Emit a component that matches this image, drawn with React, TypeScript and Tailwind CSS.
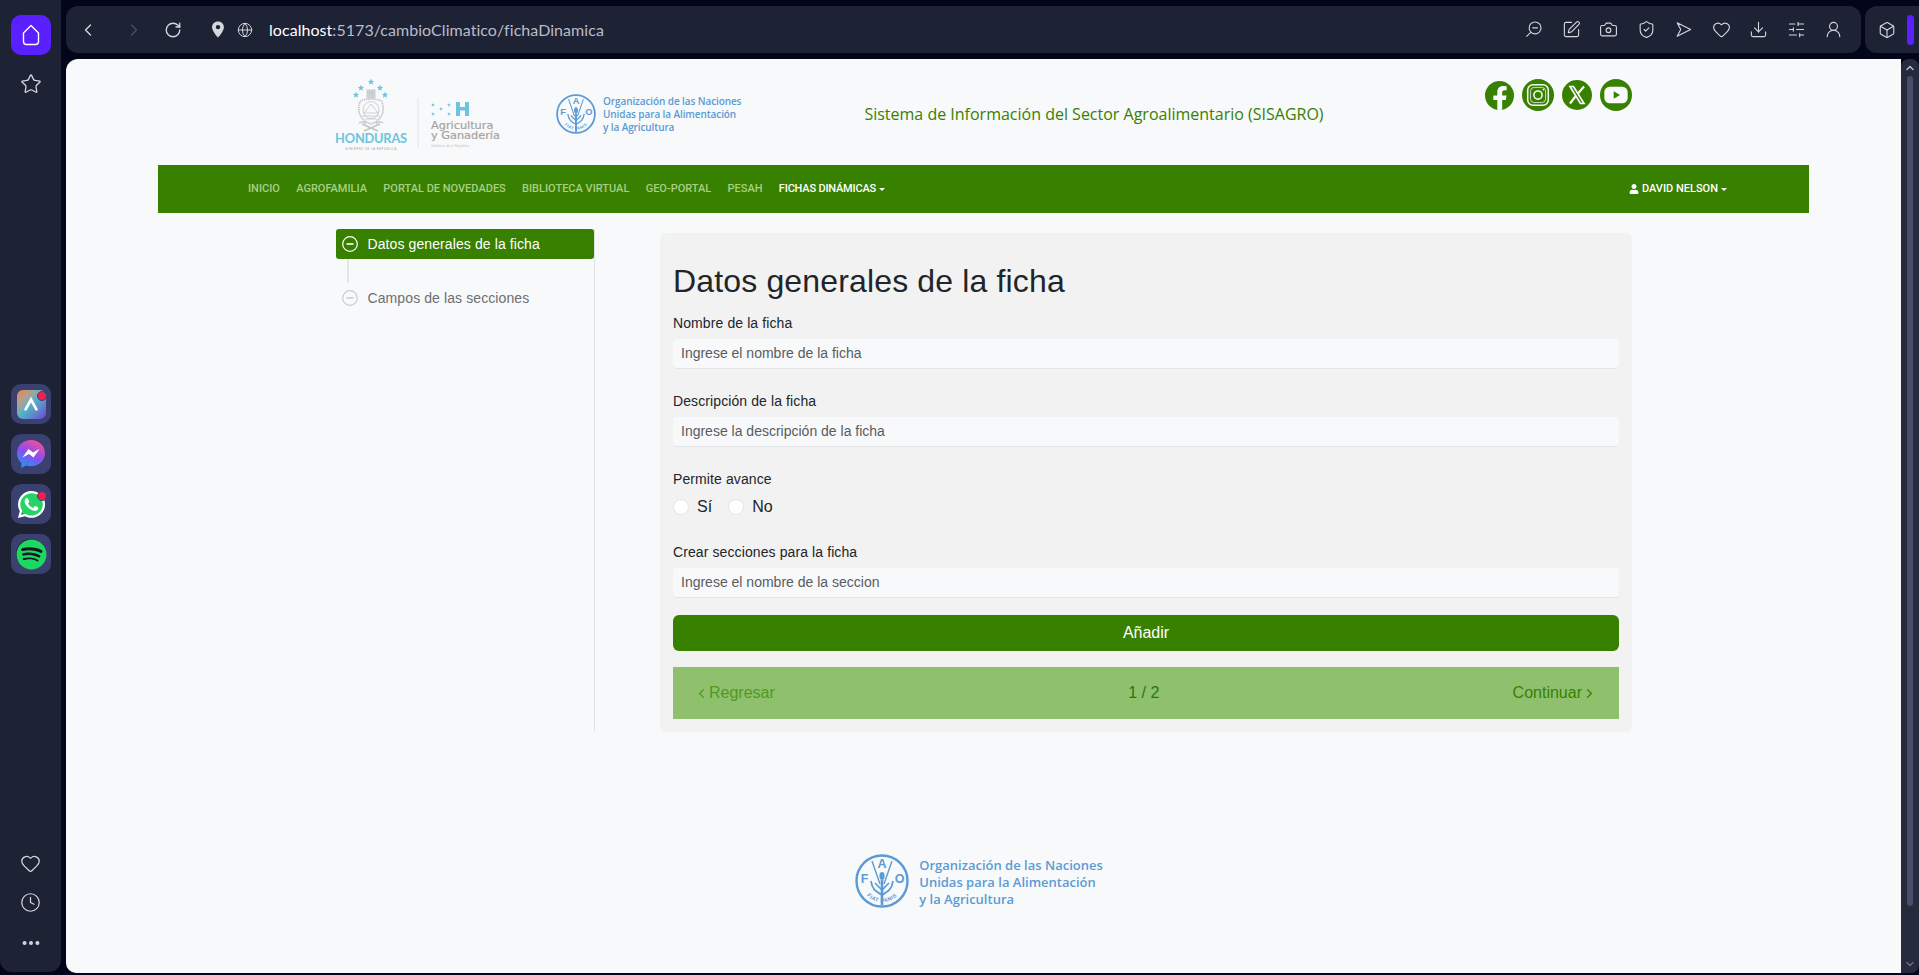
import {
  ChevronLeft,
  ChevronRight,
  RotateCw,
  Globe,
  SquarePen,
  Camera,
  ShieldCheck,
  Heart,
  Download,
  SlidersHorizontal,
  UserRound,
  Box,
  Star,
  Clock,
  Ellipsis,
  ChevronUp,
  ChevronDown,
} from "lucide-react";
import { FaFacebookF, FaWhatsapp, FaSpotify, FaUser } from "react-icons/fa";

const navItems = ["INICIO", "AGROFAMILIA", "PORTAL DE NOVEDADES", "BIBLIOTECA VIRTUAL", "GEO-PORTAL", "PESAH"];

function FaoLogo({ className, id }: { className: string; id: string }) {
  return (
    <svg viewBox="0 0 54 54" className={className} fill="none" stroke="#5b9bd5">
      <defs>
        <path id={id} d="M6.500 31 A 20.800 20.800 0 0 0 47.500 31" />
      </defs>
      <circle cx="27" cy="27" r="25.500" strokeWidth="2.400" />
      <path d="M17 7 L25 30 M37 7 L29 30" strokeWidth="1.400" />
      <path d="M16 27 C17 36 22 38 27 41 C32 38 37 36 38 27" strokeWidth="1.800" />
      <path d="M27 26 L27 51" strokeWidth="2.600" />
      <path d="M20 29 L27 36 L34 29" strokeWidth="1.600" />
      <ellipse cx="27" cy="22" rx="2.600" ry="4" fill="#5b9bd5" stroke="none" />
      <g fill="#5b9bd5" stroke="none" fontFamily="Liberation Sans, sans-serif" fontWeight="700" textAnchor="middle">
        <text x="27" y="14" fontSize="12.500">A</text>
        <text x="9.500" y="29" fontSize="12.500">F</text>
        <text x="44.500" y="29" fontSize="12.500">O</text>
        <text fontSize="5.400" letterSpacing="0.500">
          <textPath href={`#${id}`} startOffset="50%">FIAT      PANIS</textPath>
        </text>
      </g>
    </svg>
  );
}

function StarMark({ x, y, size = 3.400, fill = "#6cc4e0" }: { x: number; y: number; size?: number; fill?: string }) {
  const pts = [];
  for (let i = 0; i < 10; i++) {
    const r = i % 2 === 0 ? size : size * 0.42;
    const a = (Math.PI / 5) * i - Math.PI / 2;
    pts.push(`${(x + r * Math.cos(a)).toFixed(2)},${(y + r * Math.sin(a)).toFixed(2)}`);
  }
  return <polygon points={pts.join(" ")} fill={fill} />;
}

function HondurasLogo() {
  return (
    <svg viewBox="0 0 180 74" className="w-[180px] h-[74px] shrink-0">
      <StarMark x={36} y={4} />
      <StarMark x={26} y={10} />
      <StarMark x={45} y={10} />
      <StarMark x={21} y={17} />
      <StarMark x={50} y={17} />
      {/* escudo */}
      <g fill="none" stroke="#c3c5c7" strokeWidth="0.800">
        <rect x="32" y="12" width="8" height="8" fill="#d4d5d7" />
        <path d="M32 15h8M35 12v8M37.500 12v8" />
        <path d="M25 24 C27 20 45 20 47 24 C50 32 48 42 36 46 C24 42 22 32 25 24z" strokeWidth="1.600" strokeDasharray="1.500 0.700" />
        <ellipse cx="36" cy="32" rx="8" ry="8.500" />
        <path d="M29 35 L36 26 L43 35 Z M27 38h18M30 41h12" />
        <path d="M27 46 L43 53 M45 46 L29 53" strokeWidth="1.800" />
        <path d="M24 45c3-2 6-1 7 1M48 45c-3-2-6-1-7 1" strokeWidth="1.300" />
      </g>
      <text x="36" y="65" textAnchor="middle" fontSize="12.800" fontWeight="700" fill="#6cc4e0" fontFamily="Lato, sans-serif" letterSpacing="-0.200">HONDURAS</text>
      <text x="36" y="71.500" textAnchor="middle" fontSize="2.600" fill="#9a9a9a" fontFamily="Liberation Sans, sans-serif" letterSpacing="0.600">GOBIERNO DE LA REPUBLICA</text>
      <path d="M83 20 V70" stroke="#e2e4e6" strokeWidth="1" />
      <StarMark x={98} y={27} size={2} />
      <StarMark x={114} y={27} size={2} />
      <StarMark x={98} y={36} size={2} />
      <StarMark x={114} y={36} size={2} />
      <StarMark x={106} y={31} size={2} />
      <path d="M121 24h4v5h5v-5h4v14h-4v-5.500h-5v5.500h-4z" fill="#6cc4e0" />
      <g fill="#a3a3a3" fontFamily="DejaVu Sans, sans-serif" fontSize="11.300">
        <text x="96" y="51" stroke="#a3a3a3" strokeWidth="0.200">Agricultura</text>
        <text x="96" y="61" stroke="#a3a3a3" strokeWidth="0.200">y Ganadería</text>
      </g>
      <text x="96" y="68.500" fontSize="3.400" fill="#c4c4c4" fontFamily="Liberation Sans, sans-serif">Gobierno de la República</text>
    </svg>
  );
}

function SocialIcons() {
  return (
    <div className="flex items-center gap-[8px] h-[32px]">
      <div className="w-[29px] h-[29px] rounded-full bg-[#388000] flex items-end justify-center overflow-hidden">
        <FaFacebookF className="text-[#f8f9fa] w-[20px] h-[25px] -mb-[1px]" />
      </div>
      <div className="w-[32px] h-[32px] rounded-full bg-[#388000] flex items-center justify-center">
        <svg viewBox="0 0 24 24" className="w-[26px] h-[26px]" fill="none" stroke="#f8f9fa" strokeWidth="1.400">
          <rect x="2.500" y="2.500" width="19" height="19" rx="5" />
          <rect x="5" y="5" width="14" height="14" rx="3.500" strokeWidth="0.700" />
          <circle cx="12" cy="12" r="3.800" />
          <circle cx="17" cy="7" r="0.800" fill="#f8f9fa" stroke="none" />
        </svg>
      </div>
      <div className="w-[30px] h-[30px] rounded-full bg-[#388000] flex items-center justify-center">
        <svg viewBox="0 0 24 24" className="w-[24px] h-[24px]" fill="none" stroke="#f8f9fa">
          <path d="M5 3.500h3.500L19 20.500h-3.500z" strokeWidth="1.700" />
          <path d="M19 3.500 L13.200 10.300 M10.600 13.300 L5 20.500" strokeWidth="2.200" />
        </svg>
      </div>
      <div className="w-[32px] h-[32px] rounded-full bg-[#388000] flex items-center justify-center">
        <svg viewBox="0 0 24 24" className="w-[28px] h-[28px]">
          <rect x="2" y="5" width="20" height="14" rx="4.500" fill="#f8f9fa" />
          <path d="M10 8.800 L15.500 12 L10 15.200z" fill="#388000" />
        </svg>
      </div>
    </div>
  );
}

function StepIcon({ active }: { active?: boolean }) {
  const color = active ? "#ffffff" : "#c9cbce";
  return (
    <svg viewBox="0 0 16 16" className="w-[16px] h-[16px] shrink-0" fill="none" stroke={color}>
      <circle cx="8" cy="8" r="7.300" strokeWidth="1.200" />
      <path d="M4.500 8h7" strokeWidth="1.600" />
    </svg>
  );
}

function Field({ label, placeholder, className }: { label: string; placeholder: string; className: string }) {
  return (
    <div className={className}>
      <div className="text-[14px] leading-[20px] tracking-[0.1px] text-[#212529]">{label}</div>
      <div className="mt-[6px] h-[30px] rounded-[4px] bg-[#f8f9fa] border-b border-[#e4e5e6] px-[8px] flex items-center text-[14px] text-[#595c5f]">
        {placeholder}
      </div>
    </div>
  );
}

function Radio({ label }: { label: string }) {
  return (
    <div className="flex items-center gap-[8px]">
      <span className="w-[16px] h-[16px] rounded-full bg-white border border-[#e6e6e6]" />
      <span className="text-[16px] leading-[24px] text-[#212529]">{label}</span>
    </div>
  );
}

function BrowserBar() {
  const cls = "w-[19px] h-[19px]";
  return (
    <div className="flex h-[47px] mt-[6px] gap-[4px]">
      <div className="flex-1 rounded-[12px] bg-[#1e2235] flex items-center text-[#d5d7de] pl-[12px] pr-[18px]">
        <ChevronLeft className="w-[20px] h-[20px]" strokeWidth={1.600} />
        <ChevronRight className="w-[20px] h-[20px] ml-[26px] text-[#4a4e63]" strokeWidth={1.600} />
        <RotateCw className="w-[18px] h-[18px] ml-[20px]" strokeWidth={1.800} />
        <svg viewBox="0 0 16 20" className="w-[14px] h-[17px] ml-[29px]">
          <path fillRule="evenodd" d="M8 0.500C3.800 0.500 1 3.600 1 7.300 1 12 8 19.500 8 19.500S15 12 15 7.300C15 3.600 12.200 0.500 8 0.500zM8 9.800A2.600 2.600 0 1 1 8 4.600 2.600 2.600 0 0 1 8 9.800z" fill="#d5d7de" />
        </svg>
        <Globe className="w-[16px] h-[16px] ml-[12px]" strokeWidth={1.500} />
        <div className="ml-[16px] font-['Lato',sans-serif] text-[16px] tracking-[0.05px] text-[#b9bcc8]">
          <span className="text-white">localhost</span>:5173/cambioClimatico/fichaDinamica
        </div>
        <div className="ml-auto flex items-center gap-[18.500px]">
          <svg viewBox="0 0 24 24" className={cls} fill="none" stroke="currentColor" strokeWidth="1.400">
            <circle cx="14" cy="10" r="7.500" />
            <path d="M10.500 10h7M8.500 15.500 3 21" />
          </svg>
          <SquarePen className={cls} strokeWidth={1.400} />
          <Camera className={cls} strokeWidth={1.400} />
          <ShieldCheck className={cls} strokeWidth={1.400} />
          <svg viewBox="0 0 24 24" className={cls} fill="none" stroke="currentColor" strokeWidth="1.400" strokeLinejoin="round">
            <path d="M4 3.500 21 12 4 20.500 8.500 12z" />
          </svg>
          <Heart className={cls} strokeWidth={1.400} />
          <Download className={cls} strokeWidth={1.400} />
          <SlidersHorizontal className={cls} strokeWidth={1.400} />
          <UserRound className={cls} strokeWidth={1.400} />
        </div>
      </div>
      <div className="w-[54px] rounded-l-[12px] bg-[#1e2235] flex items-center text-[#d5d7de] pl-[13px]">
        <Box className="w-[18px] h-[18px]" strokeWidth={1.500} />
        <span className="ml-[11px] w-[7px] h-[30px] rounded-full bg-[#5a20ff]" />
      </div>
    </div>
  );
}

function AppTile({ children, dot }: { children: React.ReactNode; dot?: boolean }) {
  return (
    <div className="relative w-[40px] h-[40px] rounded-[10px] bg-[#3a4070] flex items-center justify-center">
      {children}
      {dot && <span className="absolute top-[7px] right-[4px] w-[10px] h-[10px] rounded-full bg-[#f0204f] border border-[#3a4070]" />}
    </div>
  );
}

function Rail() {
  return (
    <aside className="w-[61px] h-[972px] shrink-0 rounded-b-[12px] bg-[#1e2235] flex flex-col items-start pl-[11px] pt-[15px] text-[#d5d7de]">
      <div className="w-[40px] h-[40px] rounded-[10px] bg-[#5a20ff] flex items-center justify-center text-white">
        <svg viewBox="0 0 24 24" className="w-[24px] h-[24px]" fill="none" stroke="currentColor" strokeWidth="1.400" strokeLinejoin="round">
          <path d="M12 2.500 4.500 10v8.500a3 3 0 0 0 3 3h9a3 3 0 0 0 3-3V10z" />
        </svg>
      </div>
      <Star className="w-[22px] h-[22px] ml-[9px] mt-[18px]" strokeWidth={1.400} />
      <div className="mt-[289px] flex flex-col gap-[10px]">
        <AppTile dot>
          <div className="w-[29px] h-[29px] rounded-[6px] bg-gradient-to-br from-[#f0803c] via-[#4fb2c9] to-[#6a3fd0] flex items-center justify-center">
            <svg viewBox="0 0 20 20" className="w-[18px] h-[18px]" fill="none" stroke="#fff" strokeWidth="3" strokeLinecap="round">
              <path d="M4 16 10 5 16 16" />
            </svg>
          </div>
        </AppTile>
        <AppTile>
          <svg viewBox="0 0 30 30" className="w-[30px] h-[30px]">
            <defs>
              <linearGradient id="msgr" x1="0.700" y1="0" x2="0.200" y2="1">
                <stop offset="0" stopColor="#f0509a" />
                <stop offset="0.500" stopColor="#8a4df0" />
                <stop offset="1" stopColor="#1c9cf0" />
              </linearGradient>
            </defs>
            <path d="M15 1C7 1 1 6.800 1 14.300c0 4 1.700 7.400 4.400 9.800V29l4.500-2.500c1.600.5 3.300.7 5.100.7 8 0 14-5.800 14-13S23 1 15 1z" fill="url(#msgr)" />
            <path d="M6.500 18.500 12.500 10l4.500 3.500 6.500-3.500-6 8.500-4.500-3.500z" fill="#fff" />
          </svg>
        </AppTile>
        <AppTile dot>
          <div className="relative w-[31px] h-[31px] flex items-center justify-center">
            <span className="absolute w-[25px] h-[25px] rounded-full bg-[#25d366]" />
            <FaWhatsapp className="relative w-[31px] h-[31px] text-white" />
          </div>
        </AppTile>
        <AppTile>
          <div className="w-[30px] h-[30px] rounded-full bg-[#101820] flex items-center justify-center">
            <FaSpotify className="w-[31px] h-[31px] text-[#1ed760] shrink-0" />
          </div>
        </AppTile>
      </div>
      <Heart className="w-[21px] h-[21px] ml-[9px] mt-auto" strokeWidth={1.400} />
      <Clock className="w-[21px] h-[21px] ml-[9px] mt-[18px]" strokeWidth={1.400} />
      <Ellipsis className="w-[22px] h-[22px] ml-[9px] mt-[19px] mb-[18px]" strokeWidth={2.400} />
    </aside>
  );
}

export default function App() {
  return (
    <div className="h-[975px] w-[1919px] overflow-hidden bg-[#03051a] flex font-['Liberation_Sans',Arial,sans-serif]">
      <Rail />
      <div className="flex-1 min-w-0 pl-[5px]">
        <BrowserBar />
        <div className="mt-[6px] h-[914px] flex">
          <main className="flex-1 min-w-0 rounded-tl-[12px] rounded-bl-[10px] bg-[#f8f9fa]">
            {/* header */}
            <div className="mx-[269px] h-[106px] flex items-start">
              <div className="mt-[19px]">
                <HondurasLogo />
              </div>
              <div className="ml-[41px] mt-[35px] flex items-center gap-[7px]">
                <FaoLogo id="fao-top" className="w-[40px] h-[40px]" />
                <div className="font-['Open_Sans',sans-serif] font-semibold text-[10px] leading-[13px] tracking-[-0.1px] text-[#5b9bd5] whitespace-nowrap">
                  Organización de las Naciones
                  <br />
                  Unidas para la Alimentación
                  <br />
                  y la Agricultura
                </div>
              </div>
              <div className="ml-[123px] mt-[45px] font-['Open_Sans',sans-serif] font-medium text-[16px] leading-[20px] text-[#388000] whitespace-nowrap">
                Sistema de Información del Sector Agroalimentario (SISAGRO)
              </div>
              <div className="ml-auto mt-[20px]">
                <SocialIcons />
              </div>
            </div>

            {/* nav */}
            <nav className="mx-[92px] h-[48px] bg-[#388000] flex items-center pl-[90px] pr-[82px] font-['Roboto',sans-serif] font-medium text-[11px] text-[#a9cf86] whitespace-nowrap">
              <div className="flex items-center gap-[16.300px]">
                {navItems.map((item) => (
                  <span key={item}>{item}</span>
                ))}
                <span className="text-white tracking-[-0.2px] flex items-center gap-[3px]">
                  FICHAS DINÁMICAS
                  <span className="w-0 h-0 border-x-[3px] border-x-transparent border-t-[3px] border-t-white" />
                </span>
              </div>
              <div className="ml-auto flex items-center text-white">
                <FaUser className="w-[10px] h-[10px] mr-[3px]" />
                DAVID NELSON
                <span className="ml-[3px] w-0 h-0 border-x-[3px] border-x-transparent border-t-[3px] border-t-white" />
              </div>
            </nav>

            {/* body */}
            <div className="mx-[269px] mt-[16px] flex">
              <div className="w-[260px] h-[502px] border-r border-[#dfe1e3] shrink-0">
                <div className="h-[30px] ml-[1px] rounded-[3px] bg-[#388000] flex items-center pl-[6px] gap-[9.500px] text-[14px] tracking-[0.1px] text-white">
                  <StepIcon active />
                  Datos generales de la ficha
                </div>
                <div className="ml-[12px] w-[1px] h-[24px] border-l-2 border-[#e4e5e7]" />
                <div className="h-[30px] ml-[1px] flex items-center pl-[6px] gap-[9.500px] text-[14px] tracking-[0.1px] text-[#6c6f72]">
                  <StepIcon />
                  Campos de las secciones
                </div>
              </div>
              <div className="ml-[65px] mt-[4px] w-[972px] h-[499px] rounded-[6px] bg-[#f2f2f2] px-[13px] pt-[29px]">
                <h1 className="text-[32px] leading-[38px] tracking-[0.15px] text-[#212529]">Datos generales de la ficha</h1>
                <Field className="mt-[13px]" label="Nombre de la ficha" placeholder="Ingrese el nombre de la ficha" />
                <Field className="mt-[22px]" label="Descripción de la ficha" placeholder="Ingrese la descripción de la ficha" />
                <div className="mt-[22px]">
                  <div className="text-[14px] leading-[20px] tracking-[0.1px] text-[#212529]">Permite avance</div>
                  <div className="mt-[6px] flex items-center gap-[16px]">
                    <Radio label="Sí" />
                    <Radio label="No" />
                  </div>
                </div>
                <Field className="mt-[23px]" label="Crear secciones para la ficha" placeholder="Ingrese el nombre de la seccion" />
                <div className="mt-[17px] h-[36px] rounded-[6px] bg-[#388000] flex items-center justify-center text-[16px] text-white">
                  Añadir
                </div>
                <div className="mt-[16px] h-[52px] bg-[#8fc06d] flex items-center justify-between pl-[21px] pr-[22px] text-[16px]">
                  <span className="text-[#4f9a20] flex items-center">
                    <ChevronLeft className="w-[15px] h-[15px]" strokeWidth={2} />
                    Regresar
                  </span>
                  <span className="text-[#1f7a10]">1 / 2</span>
                  <span className="text-[#388000] flex items-center">
                    Continuar
                    <ChevronRight className="w-[15px] h-[15px]" strokeWidth={2} />
                  </span>
                </div>
              </div>
            </div>

            {/* footer logo */}
            <div className="mt-[122px] flex justify-center">
              <div className="flex items-center gap-[10px] -ml-[9px]">
                <FaoLogo id="fao-bottom" className="w-[54px] h-[54px]" />
                <div className="pt-[2px] font-['Open_Sans',sans-serif] font-semibold text-[13px] leading-[17px] text-[#5b9bd5] whitespace-nowrap">
                  Organización de las Naciones
                  <br />
                  Unidas para la Alimentación
                  <br />
                  y la Agricultura
                </div>
              </div>
            </div>
          </main>
          <div className="w-[18px] shrink-0 rounded-t-[8px] rounded-br-[8px] bg-[#262a3d] flex flex-col items-center text-[#b9bcc8] pt-[3px] pb-[3px]">
            <ChevronUp className="w-[12px] h-[12px]" strokeWidth={3} />
            <div className="mt-[2px] w-[6px] h-[830px] rounded-full bg-[#4a4d6a]" />
            <ChevronDown className="w-[12px] h-[12px] mt-auto text-[#6a6d7a]" strokeWidth={3} />
          </div>
        </div>
      </div>
    </div>
  );
}
